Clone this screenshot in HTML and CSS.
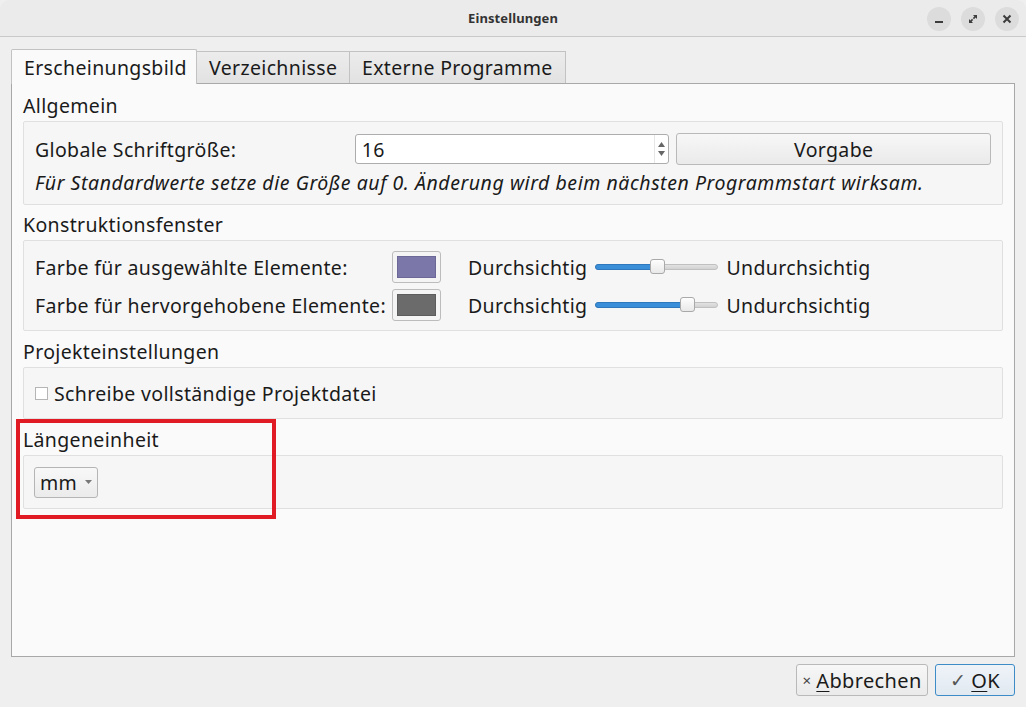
FILE: index.html
```html
<!DOCTYPE html>
<html lang="de">
<head>
<meta charset="utf-8">
<title>Einstellungen</title>
<link rel="stylesheet" href="styles.css">
</head>
<body>
<div class="window">
  <header class="titlebar">
    <span class="title">Einstellungen</span>
    <div class="wm-buttons">
      <span class="wm-btn"><svg width="12" height="12" viewBox="0 0 12 12"><rect x="2" y="8" width="8" height="2" fill="#3c3c3c"/></svg></span>
      <span class="wm-btn"><svg width="12" height="12" viewBox="0 0 12 12"><path d="M6 2h4v4L8.6 4.6 7 6.2 5.8 5 7.4 3.4z M6 10H2V6l1.4 1.4L5 5.8 6.2 7 4.6 8.6z" fill="#3c3c3c"/></svg></span>
      <span class="wm-btn"><svg width="12" height="12" viewBox="0 0 12 12"><path d="M2.5 2.5l7 7M9.5 2.5l-7 7" stroke="#3c3c3c" stroke-width="2"/></svg></span>
    </div>
  </header>

  <main class="body">
    <nav class="tabs">
      <span class="tab active">Erscheinungsbild</span>
      <span class="tab">Verzeichnisse</span>
      <span class="tab">Externe Programme</span>
    </nav>

    <section class="pane">
      <h2 class="group-title">Allgemein</h2>
      <div class="group group-general">
        <div class="row">
          <span class="label label-font">Globale Schriftgröße:</span>
          <div class="spinbox">
            <span class="spin-value">16</span>
            <span class="spin-arrows">
              <svg width="7" height="5" viewBox="0 0 7 5"><path d="M0 5L3.5 0 7 5z" fill="#666"/></svg>
              <svg width="7" height="5" viewBox="0 0 7 5"><path d="M0 0L3.5 5 7 0z" fill="#666"/></svg>
            </span>
          </div>
          <button class="btn btn-default">Vorgabe</button>
        </div>
        <p class="hint">Für Standardwerte setze die Größe auf 0. Änderung wird beim nächsten Programmstart wirksam.</p>
      </div>

      <h2 class="group-title">Konstruktionsfenster</h2>
      <div class="group group-colors">
        <div class="row">
          <span class="label label-color">Farbe für ausgewählte Elemente:</span>
          <span class="swatch"><span class="swatch-fill fill-selected"></span></span>
          <span class="label label-transp">Durchsichtig</span>
          <span class="slider"><span class="slider-fill" style="width: 61px"></span><span class="slider-handle" style="left: 54px"></span></span>
          <span class="label">Undurchsichtig</span>
        </div>
        <div class="row">
          <span class="label label-color">Farbe für hervorgehobene Elemente:</span>
          <span class="swatch"><span class="swatch-fill fill-highlight"></span></span>
          <span class="label label-transp">Durchsichtig</span>
          <span class="slider"><span class="slider-fill" style="width: 91px"></span><span class="slider-handle" style="left: 84px"></span></span>
          <span class="label">Undurchsichtig</span>
        </div>
      </div>

      <h2 class="group-title title-project">Projekteinstellungen</h2>
      <div class="group group-project">
        <label class="check"><span class="checkbox"></span>Schreibe vollständige Projektdatei</label>
      </div>

      <div class="unit-block">
        <h2 class="group-title">Längeneinheit</h2>
        <div class="group group-unit">
          <span class="combo">mm<svg width="7" height="4" viewBox="0 0 7 4"><path d="M0 0h7L3.5 4z" fill="#777"/></svg></span>
        </div>
        <span class="marker"></span>
      </div>
    </section>

    <footer class="dialog-buttons">
      <button class="btn btn-action btn-cancel"><span class="btn-icon">×</span><u>A</u>bbrechen</button>
      <button class="btn btn-action btn-ok"><span class="btn-icon check-icon">✓</span><u>O</u>K</button>
    </footer>
  </main>
</div>
</body>
</html>
```

FILE: styles.css
```css
* { box-sizing: border-box; }

html, body {
  margin: 0;
  padding: 0;
  width: 1026px;
  height: 707px;
  overflow: hidden;
  background: #efefef;
  font-family: "Noto Sans", "Open Sans", sans-serif;
  font-size: 19.5px;
  letter-spacing: 0.35px;
  color: #1a1a1a;
}

.window {
  width: 1026px;
  height: 707px;
  background: #efefef;
  border-radius: 9px 9px 0 0;
  overflow: hidden;
}

/* title bar */
.titlebar {
  height: 37px;
  background: #ebebeb;
  border-bottom: 1px solid #c9c9c9;
  display: flex;
  align-items: center;
  justify-content: center;
  position: relative;
}

.title {
  font-size: 13px;
  font-weight: bold;
  color: #333;
  letter-spacing: 0.1px;
}

.wm-buttons {
  position: absolute;
  right: 7px;
  top: 7px;
  display: flex;
  gap: 10px;
}

.wm-btn {
  width: 24px;
  height: 24px;
  border-radius: 50%;
  background: #dcdcdc;
  display: flex;
  align-items: center;
  justify-content: center;
}

/* dialog body */
.body {
  padding: 12px 11px 0 11px;
}

.tabs {
  display: flex;
  align-items: flex-end;
  height: 34px;
}

.tab {
  height: 32px;
  padding: 0 12px;
  display: flex;
  align-items: center;
  background: linear-gradient(#ececec, #e2e2e2);
  border: 1px solid #c2c2c2;
  border-bottom: none;
  border-left: none;
  color: #1a1a1a;
  white-space: nowrap;
}

.tab.active {
  height: 35px;
  margin-bottom: -1px;
  background: #fafafa;
  border: 1px solid #c2c2c2;
  border-bottom: none;
  border-radius: 2px 2px 0 0;
  position: relative;
  z-index: 1;
  width: 186px;
}

.tab:nth-child(2) { width: 153px; }
.tab:nth-child(3) { width: 216px; }

.pane {
  height: 574px;
  background: #fafafa;
  border: 1px solid #a8a8a8;
  padding: 10px 11px 0 11px;
}

.group-title {
  margin: 0;
  font-size: 19.5px;
  font-weight: normal;
  line-height: 24px;
  height: 24px;
}

.group {
  margin-top: 3px;
  background: #f6f6f6;
  border: 1px solid #e0e0e0;
  border-radius: 2px;
  padding: 0 11px;
}

.group + .group-title { margin-top: 8px; }
.group + .title-project { margin-top: 9px; }

.row {
  display: flex;
  align-items: center;
}

.label {
  white-space: nowrap;
}

/* general settings */
.group-general {
  padding-top: 11px;
  padding-bottom: 9px;
  height: 84px;
}

.label-font { width: 320px; }

.spinbox {
  width: 315px;
  height: 30px;
  background: #fff;
  border: 1px solid #adadad;
  border-radius: 3px;
  display: flex;
  align-items: center;
  justify-content: space-between;
  padding-left: 6px;
}

.spin-arrows {
  width: 14px;
  height: 100%;
  display: flex;
  flex-direction: column;
  align-items: center;
  justify-content: center;
  gap: 4px;
  border-left: 1px solid #e6e6e6;
}

.btn {
  font-family: inherit;
  letter-spacing: inherit;
  color: #1a1a1a;
  border: 1px solid #b9b9b9;
  border-radius: 3px;
  background: linear-gradient(#f7f7f7, #eaeaea);
  padding: 0;
}

.btn-default {
  margin-left: 7px;
  width: 315px;
  height: 32px;
  font-size: 19.5px;
}

.hint {
  margin: 6px 0 0 0;
  font-style: italic;
  line-height: 24px;
  letter-spacing: 0.55px;
  white-space: nowrap;
}

/* construction window colours */
.group-colors {
  height: 91px;
  padding-top: 10px;
  display: flex;
  flex-direction: column;
  gap: 6px;
}

.label-color { width: 357px; }

.swatch {
  width: 49px;
  height: 32px;
  border: 1px solid #bcbcbc;
  border-radius: 3px;
  background: #f4f4f4;
  padding: 4px;
  display: block;
}

.swatch-fill {
  display: block;
  width: 100%;
  height: 100%;
  border: 1px solid #8d8d8d;
}

.fill-selected { background: #7b78a9; border-color: #6b6898; }
.fill-highlight { background: #6b6b6b; border-color: #5c5c5c; }

.label-transp { margin-left: 27px; }

.slider {
  position: relative;
  width: 123px;
  height: 6px;
  margin: 0 8px;
  border-radius: 3px;
  background: linear-gradient(#e2e2e2, #d2d2d2);
  border: 1px solid #c0c0c0;
}

.slider-fill {
  position: absolute;
  left: -1px;
  top: -1px;
  height: 6px;
  border-radius: 3px;
  background: #3b8fd9;
  border: 1px solid #2f78bd;
}

.slider-handle {
  position: absolute;
  top: -6px;
  width: 15px;
  height: 15px;
  border-radius: 3px;
  background: linear-gradient(#fdfdfd, #e9e9e9);
  border: 1px solid #a9a9a9;
}

/* project settings */
.group-project {
  height: 52px;
  display: flex;
  align-items: center;
}

.check {
  display: flex;
  align-items: center;
}

.checkbox {
  width: 13px;
  height: 13px;
  border: 1px solid #b5b5b5;
  background: #fff;
  margin-right: 6px;
  margin-top: 1px;
}

/* length unit */
.unit-block {
  position: relative;
  margin-top: 9px;
}

.group-unit {
  height: 54px;
  display: flex;
  align-items: center;
}

.combo {
  width: 64px;
  height: 31px;
  border: 1px solid #b5b5b5;
  border-radius: 3px;
  background: linear-gradient(#f8f8f8, #ebebeb);
  display: flex;
  align-items: center;
  padding-left: 5px;
  gap: 8px;
  margin-left: -1px;
}

.marker {
  position: absolute;
  left: -7px;
  top: -9px;
  width: 260px;
  height: 100px;
  border: 4px solid #e01b24;
  pointer-events: none;
}

/* dialog buttons */
.dialog-buttons {
  display: flex;
  justify-content: flex-end;
  gap: 7px;
  margin-top: 7px;
}

.btn-action {
  height: 32px;
  display: flex;
  align-items: center;
  justify-content: center;
  font-size: 20px;
}

.btn-cancel { width: 132px; }

.btn-action u { text-decoration-thickness: 1px; text-underline-offset: 3px; }

.btn-icon {
  font-size: 15px;
  color: #444;
  margin-right: 5px;
}

.btn-ok {
  width: 80px;
  border-color: #3d8cc8;
  background: linear-gradient(#eef3f8, #e1e9f1);
}

.check-icon { font-size: 19px; color: #555; }
```
